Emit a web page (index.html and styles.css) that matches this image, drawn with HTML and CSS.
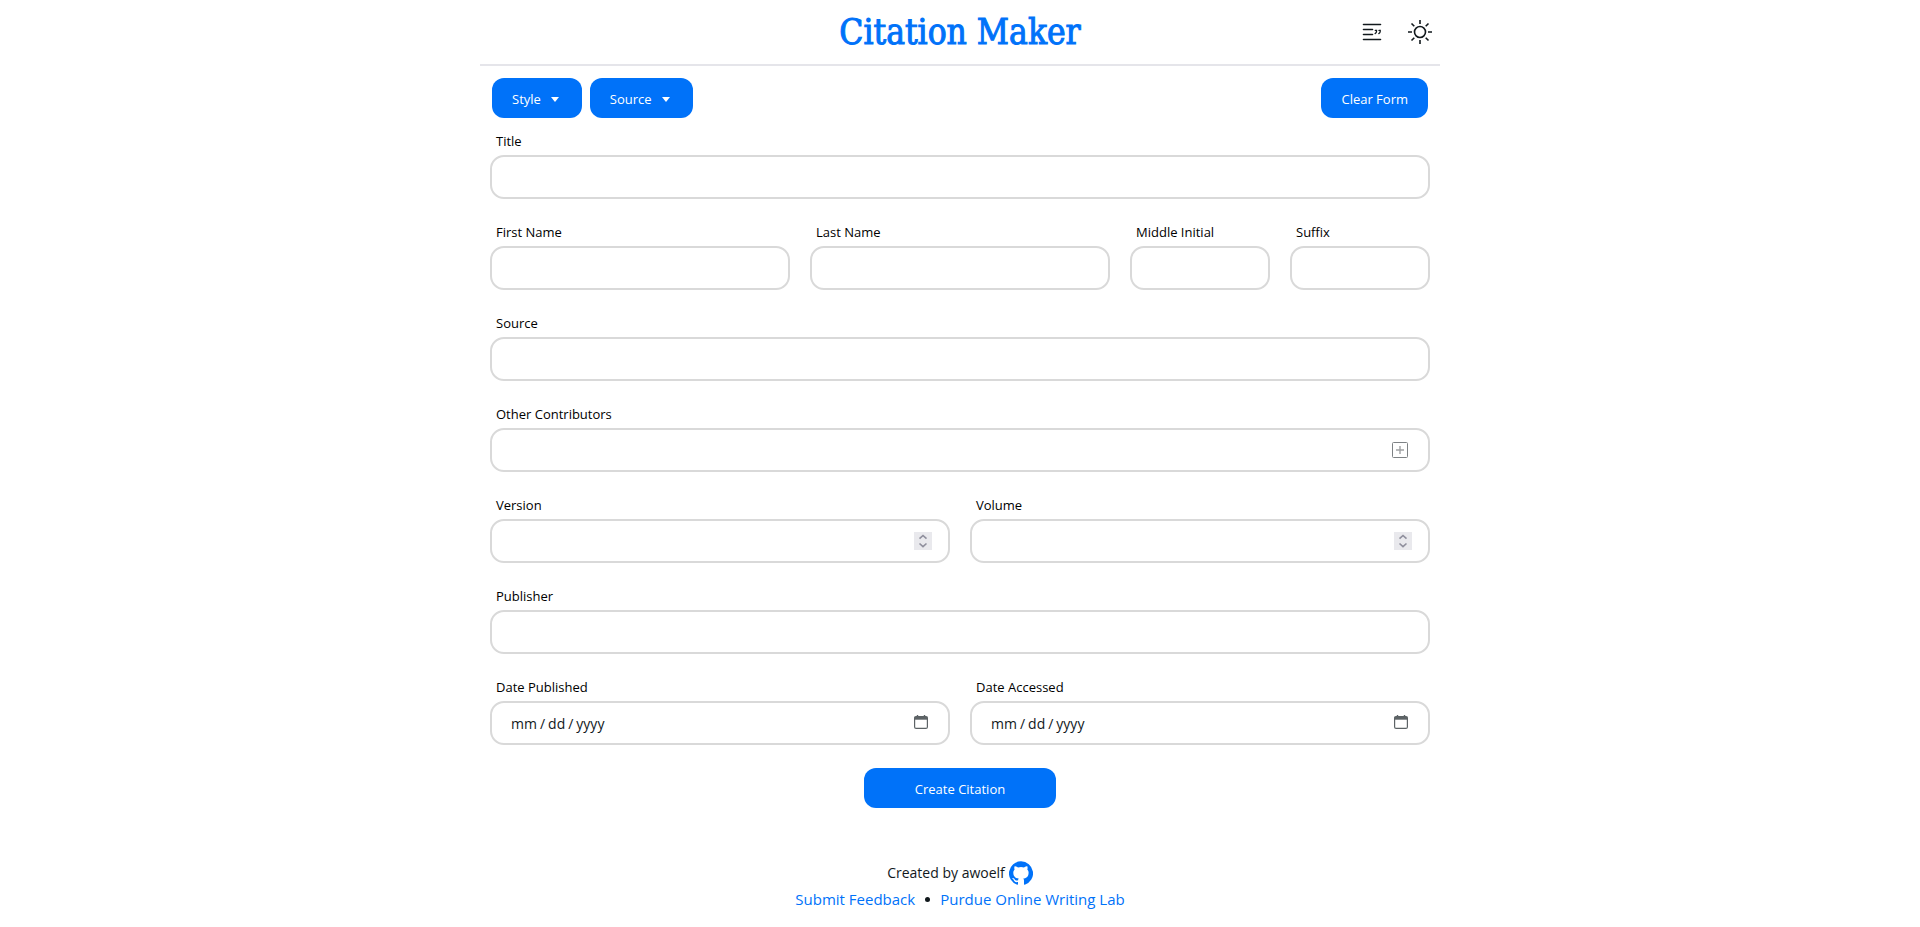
FILE: index.html
```html
<!DOCTYPE html>
<html lang="en">
<head>
<meta charset="utf-8">
<meta name="viewport" content="width=device-width, initial-scale=1">
<title>Citation Maker</title>
<link rel="stylesheet" href="styles.css">
</head>
<body>
<div class="container">
  <header class="header">
    <h1 class="title">Citation Maker</h1>
    <div class="header-actions">
      <button class="icon-btn" type="button" aria-label="Citations">
        <svg width="20" height="20" viewBox="0 0 20 20" fill="none" stroke="currentColor" stroke-width="1.6" stroke-linecap="round"><path d="M1.5 2.500h17M1.5 7.500h9M1.5 12.500h9M1.5 17.500h17"/><path stroke-width="1.3" d="M13.3 8.400h1.200v1.200c0 1-.4 1.600-1.400 2M17 8.400h1.200v1.200c0 1-.4 1.600-1.400 2"/></svg>
      </button>
      <button class="icon-btn" type="button" aria-label="Toggle theme">
        <svg width="24" height="24" viewBox="0 0 24 24" fill="none" stroke="currentColor" stroke-width="1.6"><circle cx="12" cy="12" r="5.500"/><path d="M12 0v4M12 20v4M0 12h4M20 12h4M3.5 3.500l2.800 2.800M17.700 17.700l2.800 2.800M3.500 20.500l2.800-2.800M17.700 6.300l2.800-2.800"/></svg>
      </button>
    </div>
  </header>
  <main>
    <div class="toolbar">
      <button class="btn" type="button" aria-haspopup="menu">Style <span class="caret"></span></button>
      <button class="btn" type="button" aria-haspopup="menu">Source <span class="caret"></span></button>
      <button class="btn clear" type="reset" form="citation">Clear Form</button>
    </div>
    <form class="form" id="citation">
      <div class="field full"><label for="title">Title</label><input id="title" type="text"></div>
      <div class="field third"><label for="first">First Name</label><input id="first" type="text"></div>
      <div class="field third"><label for="last">Last Name</label><input id="last" type="text"></div>
      <div class="field"><label for="middle">Middle Initial</label><input id="middle" type="text"></div>
      <div class="field"><label for="suffix">Suffix</label><input id="suffix" type="text"></div>
      <div class="field full"><label for="source">Source</label><input id="source" type="text"></div>
      <div class="field full"><label for="others">Other Contributors</label>
        <div class="control"><input id="others" type="text">
          <button class="adorn add" type="button" aria-label="Add contributor"><svg width="16" height="16" viewBox="0 0 16 16" fill="none" stroke="currentColor"><rect x=".5" y=".5" width="15" height="15" rx="1"/><path stroke="#a0a2a4" stroke-width="1.4" d="M8 4v8M4 8h8"/></svg></button>
        </div>
      </div>
      <div class="field half"><label for="version">Version</label>
        <div class="control"><input id="version" type="number"><span class="adorn spin"><svg width="18" height="18" viewBox="0 0 18 18" fill="none" stroke="currentColor" stroke-width="1.6"><path d="M5.5 6.700L9 3.500l3.500 3.200M5.5 11.500L9 14.700l3.500-3.200"/></svg></span></div>
      </div>
      <div class="field half"><label for="volume">Volume</label>
        <div class="control"><input id="volume" type="number"><span class="adorn spin"><svg width="18" height="18" viewBox="0 0 18 18" fill="none" stroke="currentColor" stroke-width="1.6"><path d="M5.5 6.700L9 3.500l3.500 3.200M5.5 11.500L9 14.700l3.500-3.200"/></svg></span></div>
      </div>
      <div class="field full"><label for="publisher">Publisher</label><input id="publisher" type="text"></div>
      <div class="field half"><label for="published">Date Published</label>
        <div class="control"><input id="published" type="date"><span class="adorn cal"><svg width="14" height="14" viewBox="0 0 14 14" fill="none" stroke="currentColor"><path d="M3.500 0v2M10.500 0v2" stroke-width="1.400"/><rect x=".6" y="1.600" width="12.800" height="11.800" rx="1.500" stroke-width="1.200"/><path d="M.6 3.200h12.800" stroke-width="3"/></svg></span></div>
      </div>
      <div class="field half"><label for="accessed">Date Accessed</label>
        <div class="control"><input id="accessed" type="date"><span class="adorn cal"><svg width="14" height="14" viewBox="0 0 14 14" fill="none" stroke="currentColor"><path d="M3.500 0v2M10.500 0v2" stroke-width="1.400"/><rect x=".6" y="1.600" width="12.800" height="11.800" rx="1.500" stroke-width="1.200"/><path d="M.6 3.200h12.800" stroke-width="3"/></svg></span></div>
      </div>
      <div class="submit-row full"><button class="btn submit" type="submit">Create Citation</button></div>
    </form>
  </main>
  <footer class="footer">
    <div class="credit">Created by awoelf
      <a href="#github" aria-label="GitHub"><svg width="24" height="24" viewBox="0 0 24 24" fill="currentColor"><path d="M12 .3a12 12 0 0 0-3.800 23.400c.6.1.8-.3.8-.6v-2c-3.300.7-4-1.600-4-1.600-.6-1.400-1.400-1.800-1.400-1.800-1-.7.1-.7.1-.7 1.200 0 1.900 1.200 1.900 1.200 1 1.800 2.800 1.300 3.500 1 0-.8.4-1.300.7-1.600-2.700-.3-5.500-1.300-5.500-6 0-1.200.5-2.300 1.300-3.100-.2-.4-.6-1.600 0-3.200 0 0 1-.3 3.400 1.200a11.500 11.500 0 0 1 6 0c2.300-1.500 3.300-1.200 3.300-1.200.6 1.600.2 2.800 0 3.200.9.8 1.300 1.900 1.300 3.200 0 4.600-2.800 5.600-5.500 5.900.5.400.9 1 .9 2.200v3.300c0 .3.1.7.8.6A12 12 0 0 0 12 .3"/></svg></a>
    </div>
    <nav class="links"><a href="#feedback">Submit Feedback</a><span class="dot"></span><a href="#owl">Purdue Online Writing Lab</a></nav>
  </footer>
</div>
</body>
</html>
```

FILE: styles.css
```css
:root {
  --blue: #0072f9;
  --ink: #11181c;
}

* { box-sizing: border-box; }

body {
  margin: 0;
  background: #fff;
  color: var(--ink);
  font-family: "Open Sans", "Noto Sans", sans-serif;
  font-size: 14px;
}

.container {
  max-width: 960px;
  margin: 0 auto;
}

.header {
  display: grid;
  grid-template-columns: 1fr auto 1fr;
  align-items: center;
  height: 66px;
  padding-left: 8px;
  padding-right: 8px;
  border-bottom: 2px solid #e5e5ea;
}

.title {
  grid-column: 2;
  margin: 0;
  color: var(--blue);
  font: 400 35px/48px "DejaVu Serif Condensed", "DejaVu Serif", serif;
  -webkit-text-stroke: 1px var(--blue);
}

.header-actions {
  display: flex;
  justify-content: flex-end;
  align-items: center;
  gap: 26px;
}

.icon-btn,
.adorn {
  display: flex;
  padding: 0;
  border: 0;
  background: none;
  color: var(--ink);
}

.toolbar {
  display: flex;
  gap: 8px;
  padding: 12px 12px 0;
}

.btn {
  display: inline-flex;
  align-items: center;
  justify-content: center;
  gap: 10px;
  height: 40px;
  padding: 2px 20px 0;
  border: 0;
  border-radius: 12px;
  background: var(--blue);
  color: #fff;
  font: 400 13px/20px "Open Sans", "Noto Sans", sans-serif;
}

.clear { margin-left: auto; }

.caret {
  margin-right: 3px;
  border: 4px solid transparent;
  border-top: 5px solid #fff;
  border-bottom: 0;
}

.form {
  display: grid;
  grid-template-columns: repeat(6, 1fr);
  column-gap: 20px;
  row-gap: 23px;
  padding: 13px 10px 0;
}

.third { grid-column: span 2; }
.half { grid-column: span 3; }
.full { grid-column: 1 / -1; }

.field label {
  display: block;
  padding: 0 6px 4px;
  color: #000;
  font-size: 13px;
  line-height: 20px;
}

.field input {
  display: block;
  width: 100%;
  height: 44px;
  padding: 0 18px;
  border: 2px solid #d9d9d9;
  border-radius: 14px;
  background: #fff;
  color: var(--ink);
  font: inherit;
}

.control { position: relative; }

.adorn {
  position: absolute;
  top: 0;
  bottom: 0;
  height: fit-content;
  margin: auto 0;
}

.add { right: 22px; color: #7e8285; }
.spin { right: 18px; background: #e9e9ed; color: #8f8f9d; pointer-events: none; }
.cal { right: 22px; padding-bottom: 2px; color: #5d6366; pointer-events: none; }

input[type="number"] { appearance: textfield; }
input::-webkit-inner-spin-button { display: none; }
input::-webkit-calendar-picker-indicator { opacity: 0; }
input::-webkit-datetime-edit-text { padding: 0 2px; }

.submit-row {
  display: flex;
  justify-content: center;
}

.submit { width: 192px; }

.footer {
  display: flex;
  flex-direction: column;
  align-items: center;
  padding: 53px 0 12px;
}

.credit {
  display: flex;
  align-items: center;
  gap: 4px;
  line-height: 24px;
}

.credit a { display: flex; }

.footer a {
  color: var(--blue);
  text-decoration: none;
}

.links {
  display: flex;
  align-items: center;
  gap: 10px;
  font-size: 15px;
  line-height: 28px;
}

.dot {
  width: 5px;
  height: 5px;
  border-radius: 50%;
  background: var(--ink);
}
```
